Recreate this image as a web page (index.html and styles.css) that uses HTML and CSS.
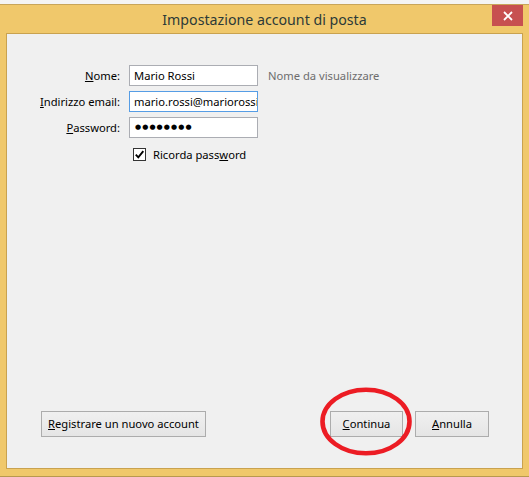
FILE: index.html
```html
<!DOCTYPE html>
<html lang="it">
<head>
<meta charset="utf-8">
<title>Impostazione account di posta</title>
<link rel="stylesheet" href="styles.css">
</head>
<body>
<div class="window">
  <div class="titlebar">
    <div class="title">Impostazione account di posta</div>
    <div class="close" aria-label="Chiudi">
      <svg width="10" height="10" viewBox="0 0 10 10"><path d="M1 1 L9 9 M9 1 L1 9" stroke="#fff" stroke-width="1.8" fill="none"/></svg>
    </div>
  </div>
  <div class="client">
    <div class="form">
      <div class="label"><u>N</u>ome:</div>
      <div class="field">Mario Rossi</div>
      <div class="hint">Nome da visualizzare</div>

      <div class="label"><u>I</u>ndirizzo email:</div>
      <div class="field focus">mario.rossi@mariorossi.it</div>
      <div></div>

      <div class="label"><u>P</u>assword:</div>
      <div class="field pwd">●●●●●●●●</div>
      <div></div>

      <div></div>
      <div class="check-row">
        <span class="checkbox">
          <svg width="11" height="11" viewBox="0 0 11 11"><path d="M1.8 5.6 L4.3 8.3 L9.3 2.2" stroke="#000" stroke-width="1.9" fill="none"/></svg>
        </span>
        <span>Ricorda pass<u>w</u>ord</span>
      </div>
      <div></div>
    </div>

    <div class="spacer"></div>

    <div class="buttons">
      <div class="btn register"><u>R</u>egistrare un nuovo account</div>
      <div class="right-buttons">
        <div class="btn primary"><u>C</u>ontinua</div>
        <div class="btn cancel"><u>A</u>nnulla</div>
      </div>
    </div>

    <svg class="circle" width="92" height="70" viewBox="0 0 92 70">
      <ellipse cx="46" cy="34.5" rx="43.5" ry="31.8" fill="none" stroke="#ec1c24" stroke-width="4.6"/>
    </svg>
  </div>
</div>
</body>
</html>
```
FILE: styles.css
```css
html, body {
  margin: 0;
  padding: 0;
}
body {
  width: 529px;
  height: 477px;
  overflow: hidden;
  background: #f4f4f4;
  font-family: "Noto Sans", "Open Sans", sans-serif;
  font-size: 11.2px;
  color: #000;
}
.window {
  margin-top: 4px;
  border-top: 1px solid #c8a55a;
  border-bottom: 1px solid #b8994f;
  background: #f0c86b;
  height: 471px;
  display: flex;
  flex-direction: column;
}
.titlebar {
  position: relative;
  height: 28px;
  flex: none;
}
.title {
  text-align: center;
  font-size: 14.2px;
  line-height: 29px;
  color: #2c3a38;
}
.close {
  position: absolute;
  top: 0;
  right: 6px;
  width: 31px;
  height: 21px;
  background: #c75050;
  display: flex;
  align-items: center;
  justify-content: center;
}
.client {
  position: relative;
  margin-left: 6px;
  width: 515px;
  height: 434px;
  border: 1px solid #c9a24f;
  background: #f0f0f0;
  display: flex;
  flex-direction: column;
}
.form {
  margin-top: 31px;
  margin-left: 28px;
  display: grid;
  grid-template-columns: 85px 129px auto;
  column-gap: 9px;
  row-gap: 5px;
  align-items: center;
}
.label {
  text-align: right;
  white-space: nowrap;
}
.field {
  box-sizing: border-box;
  height: 21px;
  border: 1px solid #abadb3;
  background: #fff;
  padding: 0 4px;
  line-height: 19px;
  white-space: nowrap;
  overflow: hidden;
}
.field.focus {
  border-color: #569de5;
}
.field.pwd {
  font-family: "DejaVu Sans", sans-serif;
  font-size: 7px;
  letter-spacing: 1.1px;
  padding-left: 5px;
}
.hint {
  margin-left: 1px;
  color: #6d6d6d;
  white-space: nowrap;
}
.check-row {
  grid-column: 2 / 4;
  margin-top: 4px;
  padding-left: 4px;
  display: flex;
  align-items: center;
  gap: 7px;
  white-space: nowrap;
}
.checkbox {
  box-sizing: border-box;
  width: 13px;
  height: 13px;
  border: 1px solid #333;
  background: #fff;
  display: flex;
  align-items: center;
  justify-content: center;
}
.spacer {
  flex: 1;
}
.buttons {
  display: flex;
  justify-content: space-between;
  margin: 0 33px 31px 34px;
}
.right-buttons {
  display: flex;
  gap: 12px;
}
.btn {
  box-sizing: border-box;
  height: 26px;
  border: 1px solid #acacac;
  background: linear-gradient(#f0f0f0, #e5e5e5);
  text-align: center;
  line-height: 24px;
  white-space: nowrap;
}
.register {
  width: 165px;
}
.primary {
  width: 73px;
}
.cancel {
  width: 74px;
}
.circle {
  position: absolute;
  left: 313px;
  top: 353px;
}
```
